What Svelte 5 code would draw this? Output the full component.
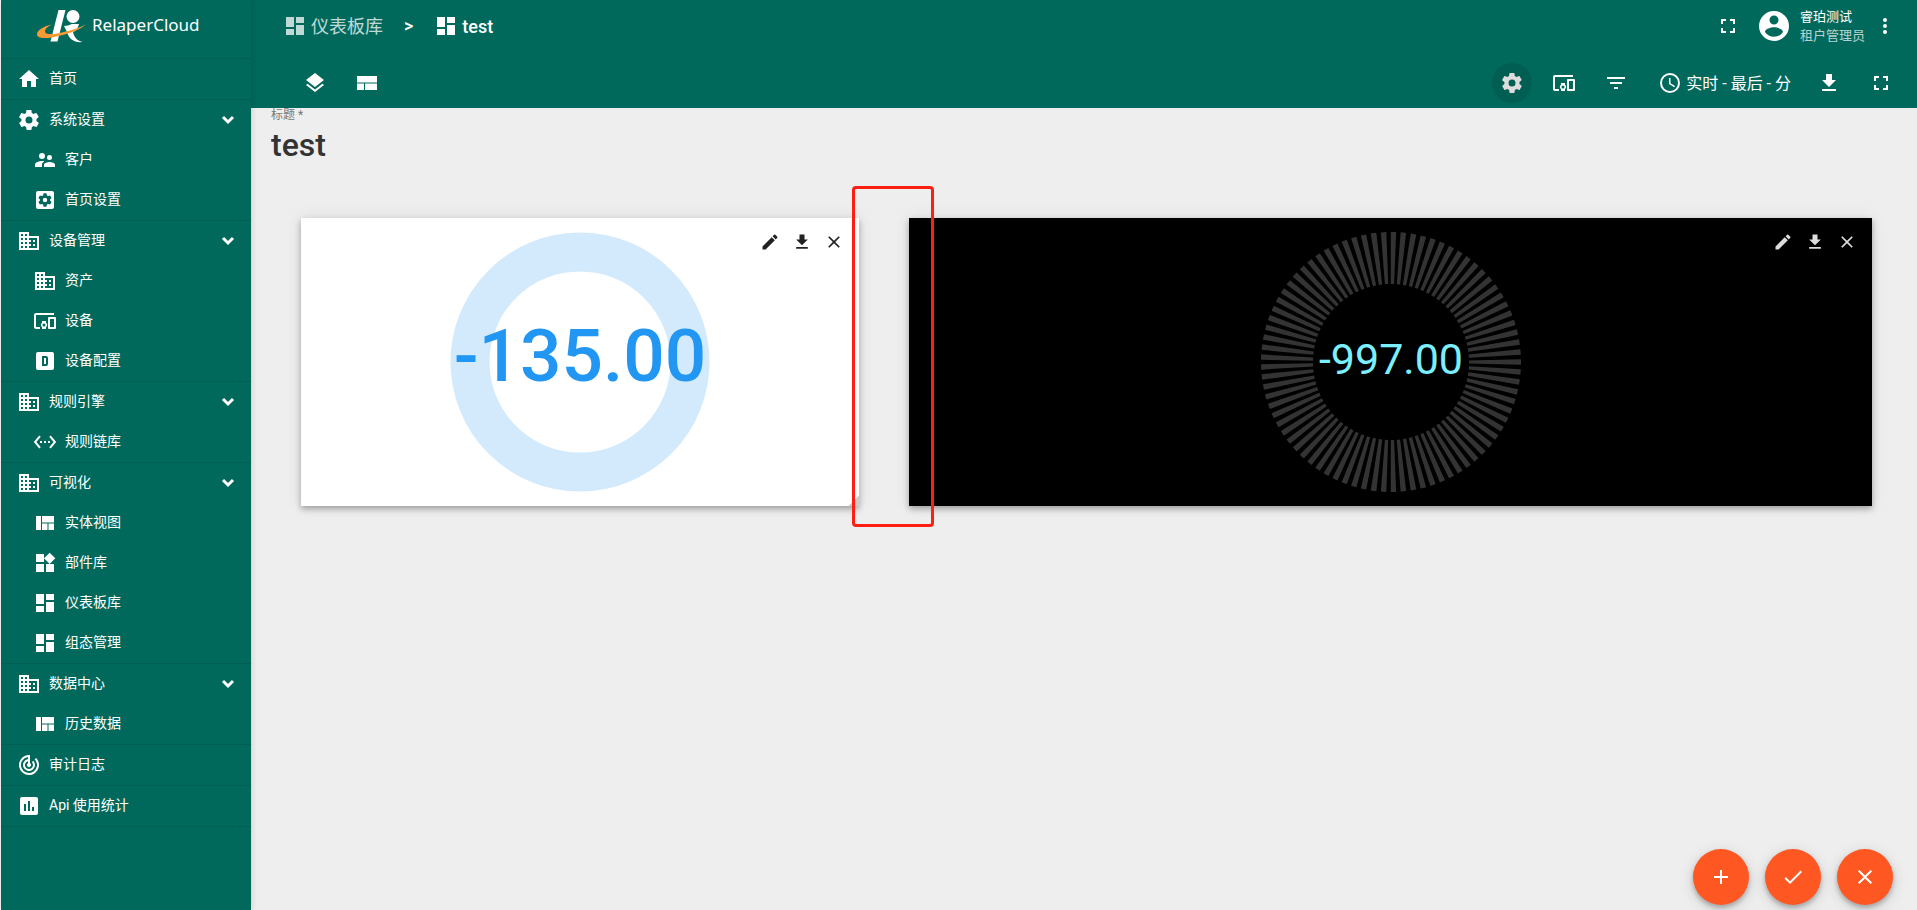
<script>
  const icons = {
    home: 'M10 20v-6h4v6h5v-8h3L12 3 2 12h3v8z',
    settings: 'M19.4 13c0-.3.1-.6.1-1s0-.7-.1-1l2.1-1.7c.2-.1.2-.4.1-.6l-2-3.5c-.1-.2-.4-.3-.6-.2l-2.5 1c-.5-.4-1.1-.7-1.7-1l-.4-2.6c0-.2-.2-.4-.5-.4h-4c-.2 0-.5.2-.5.4L9 5.100c-.6.200-1.200.600-1.700 1l-2.500-1c-.2-.1-.5 0-.6.2l-2 3.500c-.1.200-.1.500.1.600L4.500 11c0 .300-.1.700-.1 1s0 .700.1 1l-2.100 1.700c-.2.100-.2.400-.1.600l2 3.500c.1.200.4.300.6.200l2.500-1c.5.400 1.100.700 1.700 1l.4 2.600c0 .200.2.400.5.400h4c.200 0 .500-.2.500-.4l.4-2.600c.600-.2 1.200-.6 1.700-1l2.500 1c.200.100.500 0 .600-.2l2-3.500c.100-.2.100-.5-.1-.6zM12 15.500a3.500 3.500 0 1 1 0-7 3.500 3.500 0 0 1 0 7z',
    customers: 'M16.500 12a2.500 2.500 0 1 0 0-5 2.500 2.500 0 0 0 0 5zM9 11a3 3 0 1 0 0-6 3 3 0 0 0 0 6zm7.500 3c-1.830 0-5.500.92-5.500 2.750V19h11v-2.250c0-1.830-3.670-2.750-5.500-2.750zM9 13c-2.330 0-7 1.170-7 3.500V19h7v-2.250c0-.85.330-2.340 2.370-3.470C10.500 13.100 9.660 13 9 13z',
    settingsBox: 'M5 3h14a2 2 0 0 1 2 2v14a2 2 0 0 1-2 2H5a2 2 0 0 1-2-2V5a2 2 0 0 1 2-2zM10.500 5.300h3l.4 2.100 1.200.7 2-.7 1.500 2.600-1.600 1.400v1.200l1.600 1.400-1.500 2.600-2-.7-1.200.7-.4 2.100h-3l-.4-2.100-1.200-.7-2 .7L5.400 14 7 12.600v-1.200L5.400 10l1.500-2.600 2 .7 1.200-.7zM12 9.800a2.200 2.200 0 1 0 0 4.400 2.200 2.200 0 0 0 0-4.400z',
    domain: 'M12 7V3H2v18h20V7H12zM6 19H4v-2h2v2zm0-4H4v-2h2v2zm0-4H4V9h2v2zm0-4H4V5h2v2zm4 12H8v-2h2v2zm0-4H8v-2h2v2zm0-4H8V9h2v2zm0-4H8V5h2v2zm10 12h-8v-2h2v-2h-2v-2h2v-2h-2V9h8v10zm-2-8h-2v2h2v-2zm0 4h-2v2h2v-2z',
    devices: 'M3 6h18V4H3a2 2 0 0 0-2 2v12c0 1.100.9 2 2 2h4v-2H3V6zm10 6H9v1.780a3 3 0 0 0 0 4.440V20h4v-1.780a3 3 0 0 0 0-4.440V12zm-2 5.500a1.500 1.500 0 1 1 0-3 1.500 1.500 0 0 1 0 3zM22 8h-6c-.5 0-1 .5-1 1v10c0 .5.5 1 1 1h6c.500 0 1-.5 1-1V9c0-.5-.5-1-1-1zm-1 10h-4v-8h4v8z',
    profile: 'M5 3h14a2 2 0 0 1 2 2v14a2 2 0 0 1-2 2H5a2 2 0 0 1-2-2V5a2 2 0 0 1 2-2zm4 4v10h4a2 2 0 0 0 2-2V9a2 2 0 0 0-2-2zm2 2h2v6h-2z',
    chain: 'M7.770 6.760 6.230 5.480.820 12l5.410 6.520 1.540-1.280L3.420 12zM7 13h2v-2H7zm10-2h-2v2h2zm-6 2h2v-2h-2zm6.770-7.520-1.540 1.280L20.580 12l-4.350 5.240 1.540 1.280L23.180 12z',
    view: 'M3 5h5v14H3zM9 5h12v6.500H9zM9 12.500h5.500V19H9zM15.500 12.500H21V19h-5.500z',
    widgets: 'M13 13v8h8v-8zM3 21h8v-8H3zM3 3v8h8V3zm13.660-1.310L11 7.340 16.660 13l5.660-5.660z',
    dashboard: 'M3 13h8V3H3zm0 8h8v-6H3zm10 0h8V11h-8zm0-18v6h8V3z',
    audit: 'M19.070 4.930l-1.410 1.410A8 8 0 1 1 11 4.070v2.020A6 6 0 1 0 16.240 7.760l-1.410 1.410A4 4 0 1 1 11 8.140v2.140a2 2 0 1 0 2 0V2h-1a10 10 0 1 0 7.070 2.930z',
    stats: 'M19 3H5a2 2 0 0 0-2 2v14c0 1.100.9 2 2 2h14a2 2 0 0 0 2-2V5a2 2 0 0 0-2-2zM9 17H7v-7h2zm4 0h-2V7h2zm4 0h-2v-4h2z',
    layers: 'M12 18.540 4.620 12.810 3 14.070l9 7 9-7-1.630-1.270zM12 16l7.360-5.730L21 9l-9-7-9 7 1.630 1.270z',
    layout: 'M2 5h20v6.500H2zM2 12.500h7V19H2zM10 12.500h12V19H10z',
    fullscreen: 'M7 14H5v5h5v-2H7zm-2-4h2V7h3V5H5zm12 7h-3v2h5v-5h-2zM14 5v2h3v3h2V5z',
    account: 'M12 2a10 10 0 1 0 0 20 10 10 0 0 0 0-20zm0 3a3 3 0 1 1 0 6 3 3 0 0 1 0-6zm0 14.200a7.200 7.200 0 0 1-6-3.220c.03-1.990 4-3.080 6-3.080s5.970 1.090 6 3.080a7.200 7.200 0 0 1-6 3.220z',
    more: 'M12 8a2 2 0 1 0 0-4 2 2 0 0 0 0 4zm0 2a2 2 0 1 0 0 4 2 2 0 0 0 0-4zm0 6a2 2 0 1 0 0 4 2 2 0 0 0 0-4z',
    filter: 'M10 18h4v-2h-4zM3 6v2h18V6zm3 7h12v-2H6z',
    clock: 'M12 2a10 10 0 1 0 0 20 10 10 0 0 0 0-20zm0 18a8 8 0 1 1 0-16 8 8 0 0 1 0 16zm.5-13H11v6l5.250 3.150.75-1.230-4.500-2.670z',
    download: 'M19 9h-4V3H9v6H5l7 7zM5 18v2h14v-2z',
    edit: 'M3 17.250V21h3.750L17.810 9.940l-3.750-3.750zM20.710 7.040a1 1 0 0 0 0-1.410l-2.340-2.340a1 1 0 0 0-1.410 0l-1.830 1.830 3.750 3.750z',
    close: 'M19 6.410 17.590 5 12 10.590 6.410 5 5 6.410 10.590 12 5 17.590 6.410 19 12 13.410 17.590 19 19 17.590 13.410 12z',
    add: 'M19 13h-6v6h-2v-6H5v-2h6V5h2v6h6z',
    done: 'M9 16.200 4.800 12l-1.400 1.400L9 19 21 7l-1.400-1.400z'
  };

  const menu = [
    { icon: 'home', label: '首页' },
    { icon: 'settings', label: '系统设置', children: [
      { icon: 'customers', label: '客户' },
      { icon: 'settingsBox', label: '首页设置' }
    ] },
    { icon: 'domain', label: '设备管理', children: [
      { icon: 'domain', label: '资产' },
      { icon: 'devices', label: '设备' },
      { icon: 'profile', label: '设备配置' }
    ] },
    { icon: 'domain', label: '规则引擎', children: [
      { icon: 'chain', label: '规则链库' }
    ] },
    { icon: 'domain', label: '可视化', children: [
      { icon: 'view', label: '实体视图' },
      { icon: 'widgets', label: '部件库' },
      { icon: 'dashboard', label: '仪表板库' },
      { icon: 'dashboard', label: '组态管理' }
    ] },
    { icon: 'domain', label: '数据中心', children: [
      { icon: 'view', label: '历史数据' }
    ] },
    { icon: 'audit', label: '审计日志' },
    { icon: 'stats', label: 'Api 使用统计' }
  ];

  let open = $state(menu.map(() => true));
  let title = $state('test');
</script>

{#snippet icon(name, size = 24)}
  <svg class="icon" width={size} height={size} viewBox="0 0 24 24" fill="currentColor" fill-rule="evenodd" aria-hidden="true">
    <path d={icons[name]} />
  </svg>
{/snippet}

{#snippet actions()}
  <div class="actions">
    <button aria-label="编辑">{@render icon('edit', 20)}</button>
    <button aria-label="下载">{@render icon('download', 20)}</button>
    <button aria-label="移除">{@render icon('close', 20)}</button>
  </div>
{/snippet}

<div class="app">
  <aside>
    <a class="brand" href="#home">
      <svg width="50" height="34" viewBox="0 0 50 34" aria-hidden="true">
        <path fill="#fff" d="M21.500 1h7L20.500 32.500h-7z" />
        <circle cx="36" cy="7.500" r="6.500" fill="#fff" />
        <path fill="#fff" d="M27 17c3 0 5-1 8-2h7c-1 4-3 7-6 8 1 5 4 9 10 10-9 1-14-3-16-10z" />
        <path fill="#f79a35" d="M15 15.500C7 17 0 21 0 25.500c0 4 9 4.500 19 2C32 25 45 20 49 15c-6 4-14 6-24 8.500-9 2-17 2.500-17-1 0-3 3-5 7-7z" />
      </svg>
      <span>RelaperCloud</span>
    </a>
    <nav>
      <ul>
        {#each menu as item, i}
          <li class="group">
            {#if item.children}
              <button class="row" aria-expanded={open[i]} onclick={() => (open[i] = !open[i])}>
                {@render icon(item.icon)}
                <span>{item.label}</span>
                <svg class="chevron" class:closed={!open[i]} width="14" height="10" viewBox="0 0 14 10" aria-hidden="true">
                  <path d="M2 2l5 5 5-5" fill="none" stroke="currentColor" stroke-width="3" />
                </svg>
              </button>
              {#if open[i]}
                <ul>
                  {#each item.children as child}
                    <li><a class="row child" href="#{child.icon}">{@render icon(child.icon)}<span>{child.label}</span></a></li>
                  {/each}
                </ul>
              {/if}
            {:else}
              <a class="row" href="#{item.icon}">{@render icon(item.icon)}<span>{item.label}</span></a>
            {/if}
          </li>
        {/each}
      </ul>
    </nav>
  </aside>

  <div class="page">
    <header>
      <div class="topbar">
        <div class="crumbs">
          <a class="crumb faded" href="#dashboards">{@render icon('dashboard')}<span>仪表板库</span></a>
          <span class="separator">&gt;</span>
          <span class="crumb current">{@render icon('dashboard')}<span>test</span></span>
        </div>
        <div class="user">
          <button aria-label="全屏">{@render icon('fullscreen')}</button>
          {@render icon('account', 36)}
          <div class="identity"><span>睿珀测试</span><span class="role">租户管理员</span></div>
          <button class="more" aria-label="更多">{@render icon('more')}</button>
        </div>
      </div>
      <div class="toolbar">
        <div class="tools">
          <button class="tool" aria-label="图层">{@render icon('layers')}</button>
          <button class="tool" aria-label="布局">{@render icon('layout')}</button>
        </div>
        <div class="tools">
          <button class="tool active" aria-label="设置">{@render icon('settings')}</button>
          <button class="tool" aria-label="实体别名">{@render icon('devices')}</button>
          <button class="tool" aria-label="过滤器">{@render icon('filter')}</button>
          <button class="time">{@render icon('clock')}<span>实时 - 最后 - 分</span></button>
          <button class="tool" aria-label="导出">{@render icon('download')}</button>
          <button class="tool" aria-label="展开">{@render icon('fullscreen')}</button>
        </div>
      </div>
    </header>

    <main>
      <div class="title">
        <label for="title">标题 *</label>
        <input id="title" bind:value={title} />
      </div>
      <div class="grid">
        <section class="widget light">
          <svg class="gauge" viewBox="0 0 264 264" role="img" aria-label="-135.00">
            <circle cx="132" cy="132" r="110" fill="none" stroke="#d3eafd" stroke-width="39" />
            <text x="132" y="151" text-anchor="middle" class="value">-135.00</text>
          </svg>
          {@render actions()}
          <i class="resize"></i>
          <i class="marker"></i>
        </section>
        <section class="widget dark">
          <svg class="gauge" viewBox="0 0 264 264" role="img" aria-label="-997.00">
            <circle cx="132" cy="132" r="104" fill="none" stroke="#333" stroke-width="52" pathLength="810" stroke-dasharray="5.500 4.500" stroke-dashoffset="2.750" />
            <text x="132" y="144" text-anchor="middle" class="digital">-997.00</text>
          </svg>
          {@render actions()}
        </section>
      </div>
    </main>

    <div class="fabs">
      <button aria-label="添加">{@render icon('add')}</button>
      <button aria-label="应用">{@render icon('done')}</button>
      <button aria-label="取消">{@render icon('close')}</button>
    </div>
  </div>
</div>

<style>
  :global(body) { margin: 0; }
  .app {
    display: flex;
    min-height: 100vh;
    box-sizing: border-box;
    border-left: 1px solid #fff;
    background: #eee;
    color: #fff;
    font: 14px/20px Roboto, "Noto Sans CJK SC", sans-serif;
  }
  .icon { display: block; flex: none; }
  button {
    padding: 0;
    border: 0;
    background: none;
    color: inherit;
    font: inherit;
    cursor: pointer;
  }
  a { color: inherit; text-decoration: none; }
  ul { margin: 0; padding: 0; list-style: none; }

  aside {
    position: relative;
    z-index: 2;
    flex: none;
    width: 250px;
    background: #00695c;
    box-shadow: 0 0 6px rgba(0, 0, 0, .18);
  }
  .brand {
    display: flex;
    gap: 5px;
    height: 58px;
    padding-left: 36px;
    border-bottom: 1px solid #005f53;
    font: 17px/34px "Noto Sans", "Noto Sans CJK SC", sans-serif;
  }
  .brand svg { margin-top: 9px; }
  .brand span { margin-top: 8px; }
  .group { border-bottom: 1px solid #005f53; }
  .row {
    display: flex;
    align-items: center;
    gap: 8px;
    box-sizing: border-box;
    width: 100%;
    height: 40px;
    padding: 0 16px;
    text-align: left;
  }
  .row span { padding-bottom: 2px; }
  .child { padding-left: 32px; }
  .chevron { margin-left: auto; }
  .closed { transform: rotate(-90deg); }

  .page { flex: 1; min-width: 0; }
  header { background: #00695c; }
  .topbar {
    display: flex;
    align-items: center;
    justify-content: space-between;
    height: 52px;
    padding: 0 20px 0 32px;
  }
  .crumbs, .crumb, .user, .tools, .time { display: flex; align-items: center; }
  .crumbs { font-size: 18px; line-height: 24px; }
  .crumb { gap: 4px; }
  .crumb span { padding-top: 2px; }
  .faded { opacity: .75; }
  .current, .separator { font-weight: 500; }
  .separator { padding: 0 21px; }
  .user { gap: 16px; }
  .identity {
    display: flex;
    flex-direction: column;
    margin-left: -8px;
    font-size: 13px;
    line-height: 19px;
  }
  .role { opacity: .7; }
  .more { margin-left: -8px; }
  .toolbar {
    display: flex;
    justify-content: space-between;
    height: 56px;
    padding: 4px 16px 0 44px;
    box-sizing: border-box;
  }
  .tools { gap: 12px; height: 54px; }
  .tool {
    display: grid;
    place-items: center;
    width: 40px;
    height: 40px;
    border-radius: 50%;
  }
  .active { background: #005e53; color: #ddd; }
  .time { gap: 4px; padding: 0 6px 0 10px; font-size: 16px; }
  .time span { padding-top: 2px; }

  .title { display: flex; flex-direction: column; padding: 0 20px; }
  label { color: #777; font-size: 12px; line-height: 14px; }
  input {
    width: 100%;
    height: 46px;
    padding: 0;
    border: 0;
    outline: 0;
    background: none;
    color: #333;
    font: 500 32px/46px Roboto, "Noto Sans CJK SC", sans-serif;
  }
  .grid {
    display: grid;
    grid-template-columns: 558fr 963fr;
    gap: 50px;
    padding: 50px 45px 80px 50px;
  }
  .widget {
    position: relative;
    display: flex;
    justify-content: center;
    align-items: center;
    height: 288px;
    box-shadow: 0 3px 6px rgba(0, 0, 0, .3), 0 0 16px rgba(0, 0, 0, .08);
  }
  .light { background: #fff; color: #222; }
  .dark { background: #000; color: #ddd; }
  .gauge { width: 264px; height: 264px; overflow: visible; }
  .value { fill: #2196f3; font: 500 73px Roboto, sans-serif; }
  .digital { fill: #7cefff; font: 43px Roboto, sans-serif; }
  .actions {
    position: absolute;
    top: 14px;
    right: 15px;
    display: flex;
    gap: 12px;
  }
  .resize {
    position: absolute;
    right: 0;
    bottom: 0;
    width: 10px;
    height: 10px;
    background: linear-gradient(135deg, transparent 50%, #ccc 50%);
  }
  .marker {
    position: absolute;
    z-index: 1;
    top: -32px;
    right: -75px;
    bottom: -21px;
    width: 76px;
    border: 3px solid #ff1f12;
    border-radius: 4px;
    pointer-events: none;
  }
  .fabs { position: fixed; right: 24px; bottom: 5px; display: flex; gap: 16px; }
  .fabs button {
    display: grid;
    place-items: center;
    width: 56px;
    height: 56px;
    border-radius: 50%;
    background: #ff5722;
    box-shadow: 0 3px 5px rgba(0, 0, 0, .25), 0 4px 16px rgba(0, 0, 0, .14);
  }
</style>
